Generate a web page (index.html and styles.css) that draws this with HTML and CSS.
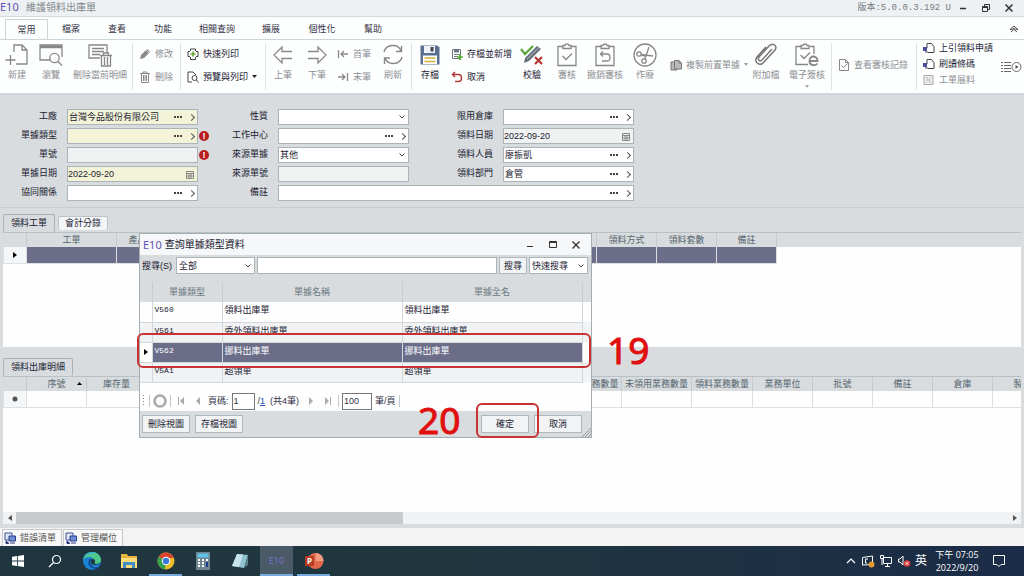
FILE: index.html
```html
<!DOCTYPE html>
<html lang="zh-Hant">
<head>
<meta charset="utf-8">
<title>維護領料出庫單</title>
<link rel="stylesheet" href="styles.css">
</head>
<body>
<header class="titlebar">
  <span class="logo">E10</span>
  <h1 class="title">維護領料出庫單</h1>
  <span class="version">版本:5.0.0.3.192 U</span>
  <div class="winbtns">
    <button aria-label="最小化"><svg width="10" height="10"><path d="M2 5.500h6" stroke="#333" stroke-width="1.500"/></svg></button>
    <button aria-label="還原"><svg width="10" height="10" fill="none" stroke="#333"><path d="M1.500 3.500h5v5h-5zM1.500 4.500h5M3.500 3V1.500h5v5H7"/></svg></button>
    <button aria-label="關閉"><svg width="10" height="10" stroke="#333" stroke-width="1.500"><path d="M1.500 1.500l7 7M8.500 1.500l-7 7"/></svg></button>
  </div>
</header>

<nav class="menu">
  <button class="menu-tab active">常用</button>
  <button class="menu-tab">檔案</button>
  <button class="menu-tab">查看</button>
  <button class="menu-tab">功能</button>
  <button class="menu-tab wide">相關查詢</button>
  <button class="menu-tab">擴展</button>
  <button class="menu-tab medium">個性化</button>
  <button class="menu-tab">幫助</button>
  <button class="collapse" aria-label="收合"><svg width="10" height="8" fill="none" stroke="#555"><path d="M1 4.500L5 1l4 3.500H7L5 3 3 4.500zM2 7l3-2.500L8 7"/></svg></button>
</nav>

<div class="ribbon">
  <button class="big w34 off"><svg width="24" height="24" fill="none" stroke="#888" stroke-width="1.300"><path d="M9 9V2h8l5 5v14H11M17 2v5h5M5.500 12v10M.5 17h10"/></svg>新建</button>
  <button class="big w34 off"><svg width="24" height="24" fill="none" stroke="#888" stroke-width="1.300"><path d="M12 17H1V2h22v12M1 4.500h22" /><path d="M1 3.300h22" stroke-width="2"/><circle cx="15.500" cy="15" r="4.700"/><path d="M19 18.500l4 4"/></svg>瀏覽</button>
  <button class="big w64 off"><svg width="26" height="24" fill="none" stroke="#888" stroke-width="1.300"><path d="M13 15H2V2h18v8M5 5.500h12M5 8.500h12M5 11.500h8"/><path d="M13 12.500h12M16.500 12v-2h5v2M14.500 13v10h9V13M17.500 14v8M20.500 14v8"/></svg>刪除當前明細</button>
  <i class="sep"></i>
  <div class="stack w47">
    <button class="small off"><svg width="12" height="12"><path d="M1 11l1-4 6-6 3 3-6 6z" fill="#8a8a8a"/><path d="M7 2l3 3" stroke="#fff" stroke-width=".7"/></svg>修改</button>
    <button class="small off"><svg width="12" height="12" fill="none" stroke="#888"><path d="M1 2.500h10M4 2V1h4v1M2.500 3v8.500h7V3M4.500 4v6M6 4v6M7.500 4v6"/></svg>刪除</button>
  </div>
  <i class="sep"></i>
  <div class="stack w84">
    <button class="small"><svg width="12" height="12" fill="none" stroke="#444"><path d="M3.500 3V1h5v2M3 3.500H1v5h2M9 3.500h2v5H9M3.500 9v2.500h5V9"/><path d="M6 3.500v5M3.500 6h5" stroke="#6a3" stroke-width="1.600"/></svg>快速列印</button>
    <button class="small"><svg width="12" height="12" fill="none" stroke="#444"><path d="M5 11H1V1h5l3 3"/><circle cx="7.500" cy="7" r="2.500"/><path d="M9.500 9l2 2.500"/></svg>預覽與列印<svg class="caret" width="5" height="4"><path d="M0 0h5L2.500 3z" fill="#222"/></svg></button>
  </div>
  <i class="sep"></i>
  <button class="big w34 off"><svg width="22" height="24" fill="none" stroke="#888" stroke-width="1.300"><path d="M20 8.500H10V4L2 12l8 8v-4.500h10"/></svg>上筆</button>
  <button class="big w34 off"><svg width="22" height="24" fill="none" stroke="#888" stroke-width="1.300"><path d="M2 8.500h10V4l8 8-8 8v-4.500H2"/></svg>下筆</button>
  <div class="stack near w41">
    <button class="small off"><svg width="12" height="12" fill="none" stroke="#888" stroke-width="1.300"><path d="M1.500 2v8M11 6H4M7 3L4 6l3 3"/></svg>首筆</button>
    <button class="small off"><svg width="12" height="12" fill="none" stroke="#888" stroke-width="1.300"><path d="M10.500 2v8M1 6h7M5 3l3 3-3 3"/></svg>末筆</button>
  </div>
  <button class="big w36 off"><svg width="22" height="24" fill="none" stroke="#888" stroke-width="1.400"><path d="M2 9c2-8 14-9 17-1M20 14c-2 8-14 9-17 1M19.500 3v5.500H14M2.500 21v-6H8"/></svg>刷新</button>
  <i class="sep"></i>
  <button class="big w36"><svg width="22" height="24"><path d="M1.500 2.500h17l2 2v17h-19z" fill="#5b7090"/><path d="M5 3h11v7H5z" fill="#eef2f6"/><path d="M11.500 4h3v4.500h-3z" fill="#445"/><path d="M4 12.500h14V21H4z" fill="#fff"/><path d="M5.500 15h11M5.500 18.500h11" stroke="#d4b13c" stroke-width="1.500"/></svg>存檔</button>
  <div class="stack near w66">
    <button class="small"><svg width="12" height="12"><path d="M1.500 1.500h8v9h-8z" fill="#fff" stroke="#68788a"/><path d="M3 1.500h5v3H3z" fill="#68788a"/><path d="M3 6.500h5M3 8.500h3" stroke="#777"/><path d="M9 6v6M6 9h6" stroke="#5a3" stroke-width="1.700"/></svg>存檔並新增</button>
    <button class="small"><svg width="12" height="12" fill="none" stroke="#b43a3a" stroke-width="1.500"><path d="M4 1L1.500 3.500 4 6M2 3.500h5.500c4 0 4 7 0 7H4"/></svg>取消</button>
  </div>
  <button class="big w36"><svg width="24" height="24" fill="none"><path d="M4 20l1-5L17 3l4 3L9 18z" fill="#66707c"/><path d="M7 16L19 4.500" stroke="#cfd5da" stroke-width=".8"/><path d="M1 6l4 5 8-8" stroke="#5ca63a" stroke-width="2.200"/><path d="M15 14l7 7M22 14l-7 7" stroke="#b63636" stroke-width="2.200"/></svg>校驗</button>
  <button class="big w34 off"><svg width="20" height="24" fill="none" stroke="#888" stroke-width="1.300"><path d="M6 3.500H1v19h18v-19h-5M6 5.500v-3h2c0-2 4-2 4 0h2v3zM5.500 13l3.500 3.500 6-6"/></svg>審核</button>
  <button class="big w42 off"><svg width="20" height="24" fill="none" stroke="#888" stroke-width="1.300"><path d="M6 3.500H1v19h18v-19h-5M6 5.500v-3h2c0-2 4-2 4 0h2v3zM8 8.500L5.500 11 8 13.500M6 11h6c4 0 4 7 0 7H7"/></svg>撤銷審核</button>
  <button class="big w38 off"><svg width="24" height="24" fill="none" stroke="#888" stroke-width="1.300"><circle cx="12" cy="12" r="11"/><circle cx="6" cy="11" r="2.200"/><circle cx="11" cy="18" r="2.200"/><path d="M8 11.500l12 1.500M12 16l4-12M8 12l4 1"/></svg>作廢</button>
  <button class="small mid off w82"><svg width="12" height="12" fill="#bbb" stroke="#777"><path d="M1 3h6v8H1z"/><path d="M4.500 1.500H9L11.500 4v6h-7z"/><path d="M9 1.500V4h2"/></svg>複製前置單據<svg class="caret" width="5" height="4"><path d="M0 0h4L2 3z" fill="#999"/></svg></button>
  <button class="big w40 off"><svg width="24" height="24" fill="none" stroke="#777" stroke-width="1.500"><path d="M18 6L8 17c-2 2-5 0-3-3L15 3c4-4 9 0 6 4L10 19c-4 5-11 0-7-5l9-10"/></svg>附加檔</button>
  <button class="big w42 off"><svg width="26" height="24" fill="none" stroke="#888" stroke-width="1.300"><path d="M7 3.500H2v18h12M16 3.500h4V11M7 5.500v-3h2c0-2 4-2 4 0h2v3zM6.500 12l3.500 3.500 6-6"/><path d="M15.500 18h8c0-6-8-6-8 0 0 5 6 5 8 2.500" stroke-width="1.900"/></svg>電子簽核<svg class="caret" width="5" height="4"><path d="M0 0h4L2 3z" fill="#aaa"/></svg></button>
  <i class="sep spaced"></i>
  <button class="small mid off w84"><svg width="12" height="12" fill="none" stroke="#888"><path d="M1.500.5h6l3 3v8h-9zM7.500.5v3h3M3.500 6.500l2 2 4-4"/></svg>查看審核記錄</button>
  <i class="sep"></i>
  <div class="stack three">
    <button class="small"><svg width="12" height="11" fill="none" stroke="#444"><path d="M4 5V.5h4.500l2.500 3v6H5"/><path d="M0 4h4v4H0z" fill="#4a4a90" stroke="none"/><path d="M2 9h3"/></svg>上引領料申請</button>
    <button class="small"><svg width="12" height="11" fill="none" stroke="#444"><path d="M4 5V.5h4.500l2.500 3v6H5"/><path d="M0 4h4v4H0z" fill="#4a4a90" stroke="none"/><path d="M2 9h3"/></svg>刷讀條碼</button>
    <button class="small off"><svg width="12" height="11" fill="#eee" stroke="#aaa"><path d="M1 .5h9v9H1zM3 3h2M7 3h1M4 5h3M3 7h1M6 7h2"/></svg>工單展料</button>
  </div>
  <button class="more" aria-label="更多"><svg width="22" height="12" fill="none" stroke="#666"><path d="M1 1.500h2M1 4.500h2M1 7.500h2M1 10.500h2M4 1.500h7M4 4.500h7M4 7.500h7M4 10.500h7"/><circle cx="16.500" cy="6" r="4.500" fill="#fff"/><path d="M15.500 4l3 2-3 2z" fill="#555" stroke="none"/></svg></button>
</div>

<main class="workspace">
  <form class="form">
    <label for="plant">工廠</label>
    <div class="field req"><input id="plant" value="台灣今品股份有限公司"><button type="button" class="dots" aria-label="選擇"></button><button type="button" class="go" aria-label="開啟"></button></div>
    <label for="kind">性質</label>
    <div class="field"><select id="kind"><option></option></select></div>
    <label for="wh">限用倉庫</label>
    <div class="field"><input id="wh"><button type="button" class="dots" aria-label="選擇"></button><button type="button" class="go" aria-label="開啟"></button></div>

    <label for="dtype">單據類型</label>
    <div class="field req"><input id="dtype"><button type="button" class="dots" aria-label="選擇"></button><button type="button" class="go" aria-label="開啟"></button><span class="err">!</span></div>
    <label for="wc">工作中心</label>
    <div class="field"><input id="wc"><button type="button" class="dots" aria-label="選擇"></button><button type="button" class="go" aria-label="開啟"></button></div>
    <label for="idate">領料日期</label>
    <div class="field ro date"><input id="idate" value="2022-09-20" readonly><svg width="8" height="9" fill="none" stroke="#888"><path d="M.5 1.500h7v7h-7zM.5 3.500h7M3 3v5M5 3v5M1 6h6"/></svg></div>

    <label for="dno">單號</label>
    <div class="field ro"><input id="dno" readonly><span class="err">!</span></div>
    <label for="src">來源單據</label>
    <div class="field"><select id="src"><option>其他</option></select></div>
    <label for="staff">領料人員</label>
    <div class="field"><input id="staff" value="廖振凱"><button type="button" class="dots" aria-label="選擇"></button><button type="button" class="go" aria-label="開啟"></button></div>

    <label for="ddate">單據日期</label>
    <div class="field req date"><input id="ddate" value="2022-09-20"><svg width="8" height="9" fill="none" stroke="#888"><path d="M.5 1.500h7v7h-7zM.5 3.500h7M3 3v5M5 3v5M1 6h6"/></svg></div>
    <label for="srcno">來源單號</label>
    <div class="field ro"><input id="srcno" readonly></div>
    <label for="dept">領料部門</label>
    <div class="field"><input id="dept" value="倉管"><button type="button" class="dots" aria-label="選擇"></button><button type="button" class="go" aria-label="開啟"></button></div>

    <label for="rel">協同關係</label>
    <div class="field"><input id="rel"><button type="button" class="dots" aria-label="選擇"></button><button type="button" class="go" aria-label="開啟"></button></div>
    <label for="memo">備註</label>
    <div class="field span"><input id="memo"><button type="button" class="dots" aria-label="選擇"></button><button type="button" class="go" aria-label="開啟"></button></div>
  </form>

  <div class="tabs">
    <button class="tab active">領料工單</button>
    <button class="tab">會計分錄</button>
  </div>
  <section class="panel upper">
    <div class="head-fill">
    <table class="grid orders">
      <colgroup><col class="c23"><col class="c90"><col class="c60"><col class="c420"><col class="c60"><col class="c60"><col class="c60"></colgroup>
      <thead><tr><th></th><th>工單</th><th>產品品號</th><th></th><th>領料方式</th><th>領料套數</th><th>備註</th></tr></thead>
      <tbody><tr class="sel"><td class="mark"><svg width="4" height="6"><path d="M0 0l4 3-4 3z"/></svg></td><td></td><td></td><td></td><td></td><td></td><td></td></tr></tbody>
    </table>
    </div>
  </section>

  <div class="tabs second">
    <button class="tab active">領料出庫明細</button>
  </div>
  <section class="panel lower">
    <div class="head-fill">
    <table class="grid details">
      <colgroup><col class="c23"><col class="c60"><col class="c60"><col class="c415"><col class="c60"><col class="c70"><col class="c61"><col class="c60"><col class="c60"><col class="c60"><col class="c60"><col class="c60"></colgroup>
      <thead><tr><th></th><th class="sorted">序號<svg width="5" height="4"><path d="M0 3h5L2.500 0z"/></svg></th><th>庫存量</th><th></th><th>應領業務數量</th><th>未領用業務數量</th><th>領料業務數量</th><th>業務單位</th><th>批號</th><th>備註</th><th>倉庫</th><th>製程</th></tr></thead>
      <tbody><tr><td class="mark"><svg width="6" height="6"><circle cx="3" cy="3" r="2.500" fill="#555"/></svg></td><td></td><td></td><td></td><td></td><td></td><td></td><td></td><td></td><td></td><td></td><td></td></tr></tbody>
    </table>
    </div>
    <div class="hscroll">
      <button aria-label="向左"><svg width="4" height="6"><path d="M4 0v6L0 3z" fill="#555"/></svg></button>
      <div class="track"><div class="thumb"></div></div>
      <button aria-label="向右"><svg width="4" height="6"><path d="M0 0v6l4-3z" fill="#555"/></svg></button>
    </div>
  </section>
</main>

<div class="dock">
  <button><svg width="12" height="12"><path d="M1 1h7v7H1z" fill="#dfe6f5" stroke="#3a4f9a"/><path d="M5 4h6.500v5H5z" fill="#6c8fd8" stroke="#2c3f86"/><path d="M2 9l3 2.500H2zM6 11h5" stroke="#2c3f86"/></svg>錯誤清單</button>
  <button><svg width="12" height="12"><path d="M1 1h7v7H1z" fill="#dfe6f5" stroke="#3a4f9a"/><path d="M5 4h6.500v5H5z" fill="#6c8fd8" stroke="#2c3f86"/><path d="M2 9l3 2.500H2zM6 11h5" stroke="#2c3f86"/></svg>管理欄位</button>
</div>

<footer class="taskbar">
  <button class="app" aria-label="開始"><svg width="14" height="14" fill="#fff"><path d="M1 2.800L6 2v4.600H1zM6.800 1.900L13 1v5.600H6.800zM1 7.400h5V12l-5-.8zM6.800 7.400H13V13l-6.200-.9z"/></svg></button>
  <button class="app" aria-label="搜尋"><svg width="14" height="14" fill="none" stroke="#fff" stroke-width="1.200"><circle cx="8.500" cy="5.500" r="4"/><path d="M5.500 8.500L1 13"/></svg></button>
  <button class="app" aria-label="Edge"><svg width="20" height="20"><circle cx="10" cy="10" r="9" fill="#1b83d2"/><path d="M1.200 9C2 3 6 1 10 1c6 0 9 4.500 9 8 0 3-3 4.500-6 4-1.500-.3-1-1.200-.4-2C13 8 10 6 7.500 6 4.500 6 2 7 1.200 9z" fill="#4fc98a"/><path d="M1.200 9C2 3 6 1 10 1c2 0 3.600.5 5 1.400C10 2 3 3 1.200 9z" fill="#35b4cf"/><path d="M7.500 8c-3 4 0 10 7 10 1-.3 2.500-1.500 3-2.500-5 2-9 0-9-4.500 0-1 .5-2.500 1-3z" fill="#124c94"/><path d="M9 9c-1 2 .5 5 4 5 2.500 0 5-1.500 5.500-3-2 2.500-6 2.300-6 1 .5-1 1-2 0-3.500-1-1-3-.5-3.500.5z" fill="#1f3742"/></svg></button>
  <button class="app" aria-label="檔案總管"><svg width="18" height="16"><path d="M1 1h6l1 2h9v12H1z" fill="#e9b43e"/><path d="M1 5h16v10H1z" fill="#fbdc7a"/><path d="M3 9h12v6h-3v-3H6v3H3z" fill="#3f8ec6"/></svg></button>
  <button class="app run" aria-label="Chrome"><svg width="18" height="18"><circle cx="9" cy="9" r="8.500" fill="#e8bd2c"/><path d="M9 9L1.640 4.750A8.500 8.500 0 0 1 16.360 4.750L17 6H9z" fill="#d8442f"/><path d="M9 9L8 17.400A8.500 8.500 0 0 1 1.640 4.750z" fill="#37a04d"/><circle cx="9" cy="9" r="4.200" fill="#fff"/><circle cx="9" cy="9" r="3.200" fill="#3b78d8"/></svg></button>
  <button class="app" aria-label="小算盤"><svg width="14" height="18"><path d="M0 0h14v18H0z" fill="#6f8590"/><path d="M1.500 1.500h11v4h-11z" fill="#5fc2e8"/><path d="M2 8h2M6 8h2M2 11h2M6 11h2M2 14h2M6 14h2M10 8h2" stroke="#fff" stroke-width="1.800"/><path d="M10 10h2v5h-2z" fill="#1c3d8a"/></svg></button>
  <button class="app" aria-label="記事本"><svg width="18" height="18"><path d="M6 2l11 1-4 13-12-2z" fill="#8fc3cf"/><path d="M6 2l6 .5L8 15l-7-1z" fill="#c6e4ea"/><path d="M13 16l4-13v10z" fill="#5b7f88"/></svg></button>
  <button class="app current run">E10</button>
  <button class="app run" aria-label="PowerPoint"><svg width="20" height="18"><circle cx="11.500" cy="9" r="8" fill="#e0674a"/><path d="M11.500 1a8 8 0 0 1 8 8h-8z" fill="#f19a80"/><path d="M1 4h9v10H1z" fill="#b83a22"/><text x="3" y="12" font-size="8" font-weight="bold" fill="#fff">P</text></svg></button>
  <div class="tray">
    <svg width="12" height="12" fill="none" stroke="#fff" stroke-width="1.200"><path d="M2 8l4-4 4 4"/></svg>
    <svg width="14" height="14" fill="none" stroke="#fff"><path d="M1.500 3.500l10-1.500v8.500l-10 .5zM7 5H4.500v4H6"/><circle cx="10.500" cy="10.500" r="3" fill="#e39a2d" stroke="none"/></svg>
    <svg width="14" height="14" fill="none" stroke="#fff"><path d="M4.500 3.500h8v6h-8zM8.500 10v2M6 12.500h5M1.500 1.500h3v3h-3zM3 5v6"/></svg>
    <svg width="14" height="14" fill="none" stroke="#fff"><path d="M1.500 5v3h1.500l3 3V2L3 5z"/><circle cx="10" cy="9.500" r="3.300" fill="#d83b3b" stroke="none"/><path d="M8.700 8.200l2.600 2.600M11.300 8.200l-2.600 2.600"/></svg>
    <span class="ime">英</span>
    <div class="clock"><span>下午 07:05</span><span>2022/9/20</span></div>
    <svg class="notice" width="14" height="14" fill="none" stroke="#fff"><path d="M1.500 1.500h11v9H9l-2 2-2-2H1.500z"/></svg>
  </div>
</footer>

<section class="dialog" role="dialog" aria-labelledby="dlg-title">
  <div class="dlg-title">
    <span class="logo">E10</span><h2 id="dlg-title">查詢單據類型資料</h2>
    <div class="winbtns">
      <button aria-label="最小化"><svg width="10" height="10"><path d="M2 6.500h6" stroke="#333"/></svg></button>
      <button aria-label="最大化"><svg width="10" height="10" fill="none" stroke="#333"><path d="M1.500 1.500h7v6h-7zM1.500 2.500h7"/></svg></button>
      <button aria-label="關閉"><svg width="10" height="10" stroke="#333" stroke-width="1.300"><path d="M1.500 1.500l7 7M8.500 1.500l-7 7"/></svg></button>
    </div>
  </div>
  <div class="search">
    <label for="scope">搜尋(S)</label>
    <select id="scope"><option>全部</option></select>
    <input aria-label="搜尋內容">
    <button class="btn">搜尋</button>
    <select class="quick" aria-label="搜尋方式"><option>快速搜尋</option></select>
  </div>
  <table class="result">
    <colgroup><col class="c12"><col class="c70"><col><col><col class="c9"></colgroup>
    <thead><tr><th></th><th>單據類型</th><th>單據名稱</th><th>單據全名</th><th></th></tr></thead>
    <tbody>
      <tr><td></td><td class="code">V560</td><td>領料出庫單</td><td>領料出庫單</td><td></td></tr>
      <tr class="alt"><td></td><td class="code">V561</td><td>委外領料出庫單</td><td>委外領料出庫單</td><td></td></tr>
      <tr class="sel"><td class="mark"><svg width="4" height="6"><path d="M0 0l4 3-4 3z"/></svg></td><td class="code">V562</td><td>挪料出庫單</td><td>挪料出庫單</td><td></td></tr>
      <tr class="alt"><td></td><td class="code">V5A1</td><td>超領單</td><td>超領單</td><td></td></tr>
    </tbody>
  </table>
  <div class="pager">
    <svg width="4" height="14"><path d="M1.500 1v12" stroke="#888" stroke-dasharray="1 2"/></svg>
    <i class="bar"></i>
    <svg width="14" height="14"><circle cx="7" cy="7" r="5.500" fill="none" stroke="#aaa" stroke-width="2.600"/></svg>
    <i class="bar"></i>
    <button class="first" aria-label="首頁"><svg width="8" height="8" fill="#aaa"><path d="M1 0h1v8H1zM7 0v8L3 4z"/></svg></button>
    <button class="prev" aria-label="上一頁"><svg width="6" height="8" fill="#aaa"><path d="M5 0v8L1 4z"/></svg></button>
    <label for="page">頁碼:</label><input id="page" class="page" value="1">
    <span>/<a href="#">1</a></span><span class="total">(共4筆)</span>
    <button class="prev" aria-label="下一頁"><svg width="6" height="8" fill="#aaa"><path d="M1 0v8l4-4z"/></svg></button>
    <button class="first" aria-label="末頁"><svg width="8" height="8" fill="#aaa"><path d="M1 0v8l4-4zM6 0h1v8H6z"/></svg></button>
    <i class="bar"></i>
    <input id="size" class="size" value="100"><label for="size">筆/頁</label>
    <i class="bar"></i>
  </div>
  <div class="dlg-foot">
    <button class="btn">刪除視圖</button>
    <button class="btn">存檔視圖</button>
    <button class="btn ok">確定</button>
    <button class="btn">取消</button>
    <svg class="grip" width="9" height="9" stroke="#999"><path d="M0 9L9 0M3 9L9 3M6 9L9 6"/></svg>
  </div>
</section>

<div class="ring row-ring"></div>
<div class="ring ok-ring"></div>
<span class="step step-19">19</span>
<span class="step step-20">20</span>
</body>
</html>
```
FILE: styles.css
```css
* { box-sizing: border-box; }
body {
  margin: 0;
  min-height: 100vh;
  position: relative;
  display: flex;
  flex-direction: column;
  overflow-x: hidden;
  background: #d8dcde;
  color: #1b1b33;
  font: 9px/14px "Liberation Sans", "Noto Sans CJK TC", sans-serif;
}
button, input, select {
  font: inherit;
  color: inherit;
  margin: 0;
  padding: 0;
  border: 0;
  border-radius: 0;
  background: none;
}
h1, h2 { margin: 0; font-weight: normal; }
svg { display: block; flex: none; }
table { border-collapse: collapse; table-layout: fixed; }
select {
  appearance: none;
  background: url("data:image/svg+xml,%3Csvg xmlns='http://www.w3.org/2000/svg' width='6' height='4'%3E%3Cpath d='M.5 .5L3 3 5.500 .5' fill='none' stroke='%23444'/%3E%3C/svg%3E") no-repeat right 3px center;
}

/* title bar */
.titlebar {
  display: flex;
  align-items: center;
  height: 17px;
  flex: none;
  background: #edf1f3;
  border-bottom: 1px solid #d5dadd;
}
.logo { font-family: "Noto Sans", sans-serif; font-size: 11px; color: #6450b4; }
.titlebar .logo { width: 26px; line-height: 12px; padding-bottom: 3px; }
.title { font-size: 10px; color: #84888c; flex: 1; }
.version { font-family: "Liberation Mono", "Noto Sans CJK TC", monospace; color: #777c80; }
.winbtns { display: flex; gap: 13px; }
.titlebar .winbtns { padding: 0 10px 0 7px; }

/* ribbon */
.menu {
  display: flex;
  align-items: flex-end;
  height: 23px;
  flex: none;
  padding-left: 5px;
  background: #fdfefe;
  border-bottom: 1px solid #cdd5d9;
}
.menu-tab { width: 46px; height: 20px; color: #333346; }
.menu-tab.active { width: 43px; border: 1px solid #cdd5d9; border-bottom: 0; }
.menu-tab.wide { width: 62px; }
.menu-tab.medium { width: 56px; }
.collapse { margin: 0 5px 6px auto; }
.ribbon {
  display: flex;
  height: 55px;
  flex: none;
  background: #fdfefe;
  border-bottom: 2px solid #cfd7da;
}
.ribbon button { white-space: nowrap; }
.ribbon .off { color: #8c8f94; }
.big { display: flex; flex-direction: column; align-items: center; padding-top: 3px; gap: 1px; flex: none; }
.big .caret { margin-top: 2px; }
.stack { display: flex; flex-direction: column; gap: 9px; padding: 7px 0 0 6px; flex: none; }
.stack.near { padding-left: 3px; }
.stack.three { gap: 2px; padding-top: 1px; flex: 1; }
.small { display: flex; align-items: center; gap: 4px; }
.mid { padding: 0 0 4px 6px; flex: none; }
.more { flex: none; width: 24px; }
.sep { width: 1px; margin: 3px 0; background: #dfe3e5; flex: none; }
.sep.spaced { margin-left: 3px; }
.w34 { width: 34px; } .w36 { width: 36px; } .w38 { width: 38px; }
.w40 { width: 40px; } .w41 { width: 41px; } .w42 { width: 42px; }
.w47 { width: 47px; } .w64 { width: 64px; } .w66 { width: 66px; }
.w82 { width: 82px; } .w84 { width: 84px; }

/* document form */
.workspace { flex: 1; display: flex; flex-direction: column; padding: 0 3px 4px; }
.form {
  display: grid;
  grid-template-columns: 54px 131px 60px 131px 74px 131px;
  grid-auto-rows: 16px;
  gap: 3px 10px;
  padding: 14px 0 6px 3px;
  margin: 0 -3px;
  border-bottom: 1px solid #c8ced1;
}
.form label { text-align: right; white-space: nowrap; }
.field {
  position: relative;
  display: flex;
  align-items: center;
  border: 1px solid #abb4b9;
  background-color: #fff;
}
.field.req { background-color: #f3f3d8; }
.field.ro { background-color: #f0f1f1; }
.field.span { grid-column: span 3; }
.field input, .field select { flex: 1; min-width: 0; height: 14px; padding-left: 1px; }
.date { padding-right: 3px; }
.date input { padding-left: 0; }
.dots { width: 12px; height: 14px; padding-left: 1px; }
.dots::before { content: ""; display: block; width: 2px; height: 2px; background: #444; box-shadow: 3px 0 #444, 6px 0 #444; }
.go { width: 12px; height: 14px; display: flex; align-items: center; justify-content: center; }
.go::before { content: ""; width: 4px; height: 4px; border: solid #555; border-width: 1px 1px 0 0; transform: rotate(45deg); }
.err {
  position: absolute;
  left: 131px;
  top: 2px;
  width: 10px;
  height: 10px;
  border-radius: 50%;
  background: #b81c1c;
  color: #fff;
  font-weight: bold;
  line-height: 10px;
  text-align: center;
}

/* detail panels */
.tabs { display: flex; align-items: flex-end; gap: 3px; height: 25px; flex: none; border-bottom: 1px solid #b9c1c5; }
.tabs.second { height: 29px; margin-top: 1px; }
.tab { height: 14px; padding: 0 6px; border: 1px solid #bcc3c7; border-bottom: 0; background: #f3f5f6; border-radius: 2px; line-height: 13px; margin-bottom: 2px; }
.tab.active { height: 18px; padding: 0 7px; background: #d8dcde; border-color: #a9b2b7; margin-bottom: 0; line-height: 17px; }
.panel { background: #fefefe; overflow: hidden; display: flex; flex-direction: column; min-width: 0; }
.panel.upper { flex: 114 1 0; }
.panel.lower { flex: 147 1 0; }
.head-fill { flex: 1; overflow: hidden; background: linear-gradient(#d8dcde 14px, #fefefe 14px); }
.grid th { height: 14px; padding: 0; font-weight: normal; color: #55656e; line-height: 12px; border-right: 1px solid #c3cacd; white-space: nowrap; overflow: hidden; }
.grid td { height: 16px; padding: 0; border: 1px solid #dde0e2; border-top: 0; }
.grid .sel td { background: #6b6d89; }
.grid .sel .mark, .grid .mark { background: #f4f6f7; }
.mark svg { margin: auto; }
.orders { width: 773px; }
.details { width: 1049px; }
.sorted svg { float: right; margin: 4px 4px 0 -9px; }
.c9 { width: 9px; } .c12 { width: 12px; } .c23 { width: 23px; } .c60 { width: 60px; }
.c61 { width: 61px; } .c70 { width: 70px; } .c90 { width: 90px; }
.c415 { width: 415px; } .c420 { width: 420px; }
.hscroll { display: flex; height: 12px; flex: none; background: #f1f2f3; }
.hscroll button { width: 13px; display: flex; align-items: center; justify-content: center; }
.track { flex: 1; }
.thumb { width: 39%; height: 12px; background: #c9cacb; }

/* docked tabs */
.dock { display: flex; align-items: flex-end; gap: 1px; height: 18px; flex: none; padding-left: 2px; background: #f2f3f2; }
.dock button { display: flex; align-items: center; gap: 4px; height: 17px; width: 60px; padding-left: 1px; border: 1px solid #c4c9cc; border-bottom: 0; color: #555; background: #f8f8f8; }

/* taskbar */
.taskbar { display: flex; height: 30px; flex: none; background: linear-gradient(90deg, #1f3640, #20363f 45%, #1b2c48); color: #fff; }
.app { width: 33px; margin-left: 4px; display: flex; align-items: center; justify-content: center; font-family: "Noto Sans", sans-serif; }
.app:first-child { margin-left: 1px; }
.app.run { border-bottom: 2px solid #76a9dd; padding-top: 2px; }
.app.current { background: #4a5a66; color: #7a6ed0; }
.tray { margin-left: auto; display: flex; align-items: center; gap: 4px; padding-right: 18px; }
.ime { font-size: 12px; }
.clock { display: flex; flex-direction: column; align-items: center; width: 52px; line-height: 13px; font-family: "Open Sans", "Noto Sans CJK TC", sans-serif; white-space: nowrap; }
.notice { margin-left: 5px; }

/* lookup dialog */
.dialog {
  position: absolute;
  left: 139px;
  top: 233px;
  width: 453px;
  display: flex;
  flex-direction: column;
  background: #d8dcde;
  border: 1px solid #a4adb2;
}
.dlg-title { display: flex; align-items: center; height: 21px; padding: 0 10px 0 3px; background: #f5f7f8; }
.dlg-title h2 { font-size: 10px; margin-left: 3px; flex: 1; }
.search { display: flex; align-items: center; gap: 2px; height: 21px; padding: 0 3px 0 2px; }
.search label { width: 32px; white-space: nowrap; }
.search select, .search input { height: 17px; border: 1px solid #abb4b9; background-color: #fff; }
.search select { width: 79px; padding-left: 2px; }
.search .quick { width: 59px; }
.search input { flex: 1; min-width: 0; }
.btn { height: 17px; padding: 0 4px; border: 1px solid #b0b8bc; background: #f1f3f4; white-space: nowrap; }
.result { width: 100%; margin-top: 6px; background: #fefefe; }
.result th { height: 20px; padding: 0; font-weight: normal; color: #6c7a82; background: #d8dcde; border-right: 1px solid #c6cccf; }
.result td { height: 20px; padding: 0 2px 3px; line-height: 14px; border-right: 1px solid #d3d7da; border-bottom: 1px solid #d3d7da; white-space: nowrap; }
.result th:last-child, .result td:last-child { border: 0; background: #fefefe; }
.result th:last-child { background: #d8dcde; }
.result .alt td { background: #f0f2f3; }
.result .sel td { background: #6b6d89; color: #fff; }
.result .sel .mark, .result .sel td:last-child { background: #fefefe; }
.result .mark { padding: 0; }
.result .code { font-family: "Liberation Mono", monospace; font-size: 8px; }
.pager { display: flex; align-items: center; gap: 3px; height: 28px; padding: 9px 2px 0; background: #fefefe; color: #333346; white-space: nowrap; }
.pager a { color: #2a4bb0; }
.bar { width: 1px; height: 12px; background: #c5cacd; }
.first, .prev { display: flex; justify-content: center; width: 14px; }
.pager input { height: 17px; border: 1px solid #777; background: #fff; padding-left: 1px; }
.pager .page { width: 23px; }
.pager .size { width: 30px; }
.total { margin: 0 2px; }
.dlg-foot { position: relative; display: flex; align-items: center; gap: 5px; height: 26px; padding: 0 9px 0 2px; }
.dlg-foot .btn { height: 18px; min-width: 48px; padding: 0 5px; }
.dlg-foot .ok { margin-left: auto; }
.grip { position: absolute; right: 0; bottom: 0; }

/* step call-outs */
.ring { position: absolute; border: 2px solid #c93232; border-radius: 6px; pointer-events: none; }
.row-ring { left: 137px; top: 333px; width: 454px; height: 35px; }
.ok-ring { left: 476px; top: 403px; width: 63px; height: 35px; }
.step { position: absolute; font: 37px/40px "Noto Sans", sans-serif; color: #e01010; -webkit-text-stroke: 1px #e01010; }
.step-19 { left: 607px; top: 330px; }
.step-20 { left: 418px; top: 400px; }
```
